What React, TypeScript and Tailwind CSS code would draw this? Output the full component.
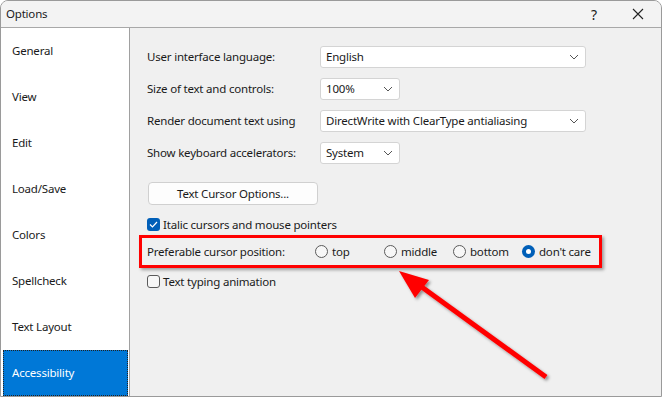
import React from 'react';

const navItems = ['General', 'View', 'Edit', 'Load/Save', 'Colors', 'Spellcheck', 'Text Layout', 'Accessibility'];

const Chevron = () => (
  <svg width="10" height="6" viewBox="0 0 10 6" className="shrink-0">
    <path d="M1 1 L5 5 L9 1" fill="none" stroke="#555" strokeWidth="1" />
  </svg>
);

const Dropdown = ({ value, wide }: { value: string; wide?: boolean }) => (
  <div
    className={`flex items-center justify-between h-[22px] bg-white border border-[#d4d4d4] rounded-[3px] pl-[5px] pr-[6px] ${
      wide ? 'w-[266px]' : 'w-[80px]'
    }`}
  >
    <span>{value}</span>
    <Chevron />
  </div>
);

const Radio = ({ label, checked, width }: { label: string; checked?: boolean; width?: string }) => (
  <div className={`flex items-center gap-[4px] ${width ?? ''}`}>
    {checked ? (
      <span className="w-[13px] h-[13px] rounded-full bg-[#005fb8] flex items-center justify-center">
        <span className="w-[5px] h-[5px] rounded-full bg-white" />
      </span>
    ) : (
      <span className="w-[13px] h-[13px] rounded-full border border-[#5a5a5a] bg-[#f7f7f7]" />
    )}
    <span>{label}</span>
  </div>
);

export default function App() {
  return (
    <div
      className="relative w-[662px] h-[397px] overflow-hidden bg-[#f0f0f0] text-[11.5px] tracking-[-0.2px] text-[#1a1a1a] border border-[#9a9a9a] rounded-t-[8px] flex flex-col"
      style={{ fontFamily: '"Noto Sans", "Open Sans", sans-serif' }}
    >
      {/* Title bar */}
      <div className="h-[27px] shrink-0 flex items-center bg-[#f3f3f3] border-b border-[#a8a8a8]">
        <span className="pl-[5px] flex-1">Options</span>
        <span className="w-[44px] text-center text-[14px]">?</span>
        <span className="w-[44px] flex justify-center mr-[1px]">
          <svg width="12" height="12" viewBox="0 0 12 12">
            <path d="M1 1 L11 11 M11 1 L1 11" stroke="#222" strokeWidth="1.1" />
          </svg>
        </span>
      </div>

      <div className="flex flex-1 min-h-0">
        {/* Sidebar */}
        <div className="w-[129px] shrink-0 bg-white border-r border-[#a0a0a0] flex flex-col pl-[2px] pr-[1px]">
          {navItems.map((item) => {
            const active = item === 'Accessibility';
            return (
              <div
                key={item}
                className={`h-[46px] shrink-0 flex items-center ${
                  active
                    ? 'bg-[#0078d7] text-white border border-dotted border-[#222] pl-[8px]'
                    : 'pl-[9px]'
                }`}
              >
                {item}
              </div>
            );
          })}
        </div>

        {/* Content */}
        <div className="flex-1 flex flex-col pl-[17px] pt-[18px]">
          <div className="flex flex-col gap-[10px]">
            <div className="flex items-center">
              <span className="w-[173px]">User interface language:</span>
              <Dropdown value="English" wide />
            </div>
            <div className="flex items-center">
              <span className="w-[173px]">Size of text and controls:</span>
              <Dropdown value="100%" />
            </div>
            <div className="flex items-center">
              <span className="w-[173px]">Render document text using</span>
              <Dropdown value="DirectWrite with ClearType antialiasing" wide />
            </div>
            <div className="flex items-center">
              <span className="w-[173px]">Show keyboard accelerators:</span>
              <Dropdown value="System" />
            </div>
          </div>

          <div className="mt-[18px] ml-[1px] w-[170px] h-[23px] flex items-center justify-center bg-[#fdfdfd] border border-[#d0d0d0] rounded-[4px]">
            Text Cursor Options...
          </div>

          <div className="mt-[11px] flex items-center gap-[3px]">
            <span className="w-[13px] h-[13px] rounded-[3px] bg-[#005fb8] flex items-center justify-center">
              <svg width="9" height="7" viewBox="0 0 9 7">
                <path d="M1 3.5 L3.5 6 L8 1" fill="none" stroke="white" strokeWidth="1.2" />
              </svg>
            </span>
            <span>Italic cursors and mouse pointers</span>
          </div>

          {/* Highlighted row */}
          <div className="mt-[2px] -ml-[8px] w-[463px] h-[33px] border-[3px] border-[#ff0000] shadow-[2px_2px_3px_rgba(0,0,0,0.35)] flex items-center pl-[5px]">
            <span className="w-[168px]">Preferable cursor position:</span>
            <Radio label="top" width="w-[69px]" />
            <Radio label="middle" width="w-[69px]" />
            <Radio label="bottom" width="w-[69px]" />
            <Radio label="don't care" checked />
          </div>

          <div className="mt-[5px] flex items-center gap-[3px]">
            <span className="w-[13px] h-[13px] rounded-[3px] border border-[#5a5a5a] bg-[#f7f7f7]" />
            <span>Text typing animation</span>
          </div>
        </div>
      </div>

      {/* Annotation arrow */}
      <svg className="absolute left-0 top-0 pointer-events-none" width="662" height="397">
        <defs>
          <filter id="sh" x="-20%" y="-20%" width="140%" height="140%">
            <feDropShadow dx="2" dy="2" stdDeviation="1.5" floodColor="#000" floodOpacity="0.4" />
          </filter>
        </defs>
        <g filter="url(#sh)">
          <line x1="545" y1="376" x2="418" y2="284" stroke="#ff0000" strokeWidth="5" />
          <polygon points="398,270 428,279 414,297" fill="#ff0000" />
        </g>
      </svg>
    </div>
  );
}
